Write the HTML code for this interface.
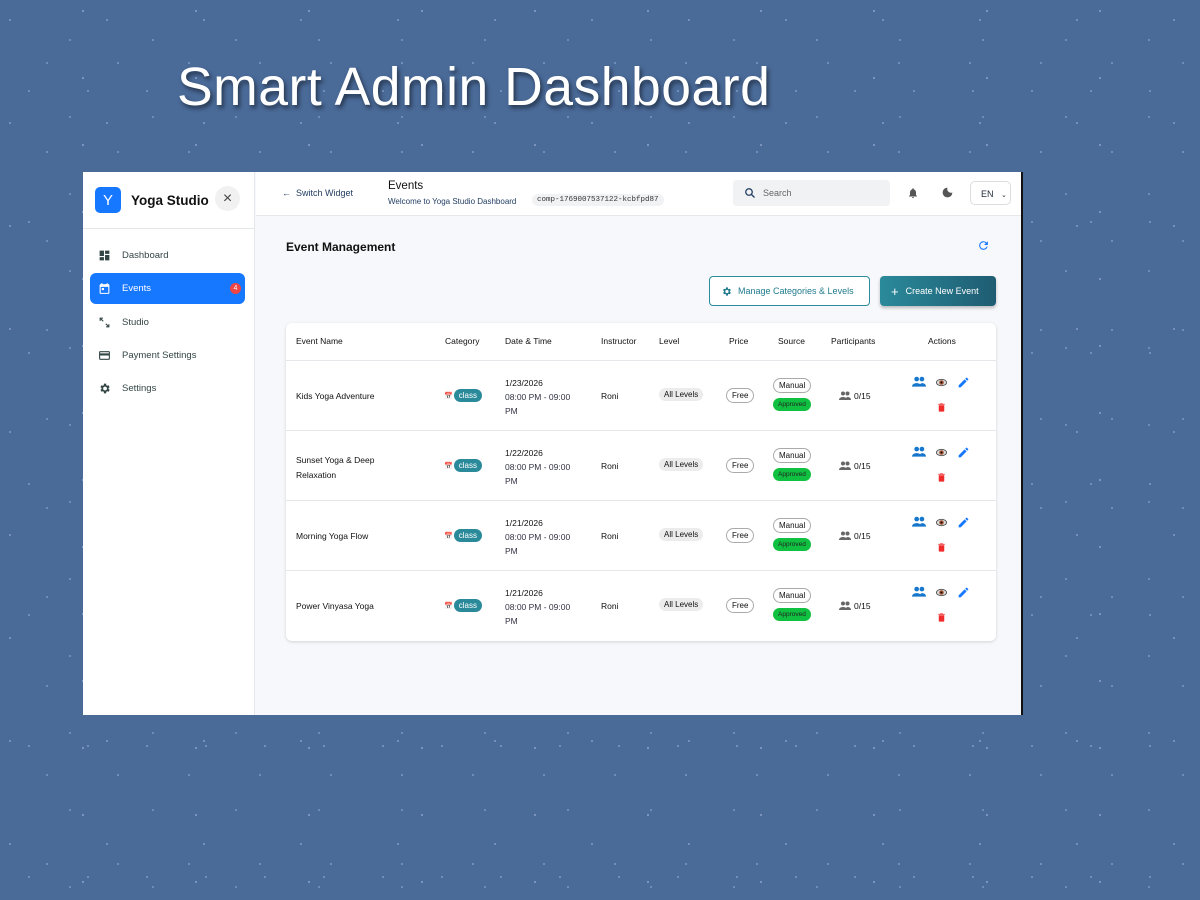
<!DOCTYPE html>
<html><head><meta charset="utf-8"><style>
*{box-sizing:border-box;margin:0;padding:0}
body{width:1200px;height:900px;overflow:hidden;background:#4a6a98;font-family:"Liberation Sans",sans-serif;position:relative;color:#1f2937}
.stars{position:absolute;inset:0;background-image:radial-gradient(1px 1px at 10px 20px,#a9bde0 50%,transparent),radial-gradient(1px 1px at 47px 63px,#9fb6dc 50%,transparent),radial-gradient(1px 1px at 83px 11px,#b3c6e8 50%,transparent),radial-gradient(1px 1px at 29px 91px,#a3b8de 50%,transparent),radial-gradient(1px 1px at 70px 40px,#9cb2d8 50%,transparent);background-size:97px 103px,71px 89px,113px 67px,59px 131px,83px 77px}
h1{position:absolute;left:177px;top:57px;font-size:53.5px;font-weight:400;color:#fff;text-shadow:2px 3px 4px rgba(0,0,0,.5);letter-spacing:.5px}
.panel{position:absolute;left:83px;top:172px;width:940px;height:543px;background:#f7f8fb;border-right:2px solid #111}
.side{position:absolute;left:0;top:0;width:172px;height:543px;background:#fff;border-right:1px solid #e5e7eb}
.brand{height:57px;border-bottom:1px solid #e5e7eb;display:flex;align-items:center;padding-left:12px}
.logo{width:26px;height:26px;background:#1677ff;border-radius:5px;color:#fff;font-size:15px;display:flex;align-items:center;justify-content:center}
.bname{font-weight:bold;font-size:13.5px;margin-left:10px;color:#111}
.close{position:absolute;left:132px;top:14px;width:25px;height:25px;border-radius:50%;background:#f1f1f1;text-align:center;line-height:25px;color:#444;font-size:16px}
.nav{position:absolute;left:7px;width:155px;height:31px;display:flex;align-items:center;padding-left:8px;font-size:9.5px;color:#344;border-radius:6px}
.nav svg{width:13px;height:13px;margin-right:11px}
.nav.act{background:#1677ff;color:#fff}
.badge{position:absolute;right:4px;width:11px;height:11px;border-radius:50%;background:#ef4444;color:#fff;font-size:7px;text-align:center;line-height:11px}
.top{position:absolute;left:173px;top:0;right:0;height:44px;background:#fff;border-bottom:1px solid #e5e7eb}
.sw{position:absolute;left:26px;top:16px;font-size:9px;color:#1e3a5f}
.tt{position:absolute;left:132px;top:8px;font-size:11.5px;color:#111}
.ts{position:absolute;left:132px;top:25px;font-size:8px;color:#1e3a5f}
.comp{position:absolute;left:276px;top:22px;background:#f1f2f4;border-radius:7px;padding:2px 5px;font-family:"Liberation Mono",monospace;font-size:7.5px;color:#333}
.search{position:absolute;left:477px;top:8px;width:157px;height:26px;background:#f1f2f4;border-radius:4px;font-size:9px;color:#666;padding:8px 0 0 30px}
.lang{position:absolute;left:714px;top:9px;width:41px;height:24px;border:1px solid #ddd;border-radius:5px;font-size:9px;padding:7px 0 0 10px}
.em{position:absolute;left:203px;top:68px;font-size:12px;font-weight:bold;color:#111}
.btn1{position:absolute;left:626px;top:104px;width:161px;height:30px;border:1px solid #2c8c9c;border-radius:4px;background:#fff;color:#1f7a8c;font-size:9px;display:flex;align-items:center;padding-left:11px}
.btn2{position:absolute;left:797px;top:104px;width:116px;height:30px;border-radius:4px;background:linear-gradient(90deg,#2a8a9a,#1f5c72);color:#fff;font-size:9px;display:flex;align-items:center;padding-left:11px;box-shadow:0 2px 3px rgba(0,0,0,.25)}
.card{position:absolute;left:203px;top:151px;width:710px;height:318px;background:#fff;border-radius:6px;box-shadow:0 1px 3px rgba(0,0,0,.15)}
.th{position:absolute;top:13px;font-size:8.5px;color:#111}
.row{position:absolute;left:0;width:710px;height:70px;border-top:1px solid #e5e7eb;font-size:8.5px;color:#111}
.row>*{position:absolute}
.cls{background:#2a8a9a;color:#fff;border-radius:8px;padding:2px 5px;font-size:8px}
.pill{border-radius:9px;padding:2px 5px;font-size:8px}
.ap{background:#10c040;color:#222;border-radius:7px;font-size:6.5px;padding:3px 5px}
</style></head><body>
<div class="stars"></div>
<h1>Smart Admin Dashboard</h1>
<div class="panel">
 <div class="side">
  <div class="brand"><div class="logo">Y</div><div class="bname">Yoga Studio</div><div class="close">×</div></div>
  <div class="nav" style="top:68px"><svg viewBox="0 0 24 24" fill="#344"><path d="M3 13h8V3H3zm0 8h8v-6H3zm10 0h8V11h-8zm0-18v6h8V3z"/></svg>Dashboard</div>
  <div class="nav act" style="top:101px"><svg viewBox="0 0 24 24" fill="#fff"><path d="M19 4h-1V2h-2v2H8V2H6v2H5a2 2 0 00-2 2v14a2 2 0 002 2h14a2 2 0 002-2V6a2 2 0 00-2-2zm0 16H5V9h14zM7 11h4v4H7z"/></svg>Events<span class="badge">4</span></div>
  <div class="nav" style="top:135px"><svg viewBox="0 0 24 24" fill="#344"><path d="M3 3h6v2H6.4l4 4-1.4 1.4-4-4V9H3zm18 18h-6v-2h2.6l-4-4 1.4-1.4 4 4V15h2z"/></svg>Studio</div>
  <div class="nav" style="top:168px"><svg viewBox="0 0 24 24" fill="#344"><path d="M20 4H4a2 2 0 00-2 2v12a2 2 0 002 2h16a2 2 0 002-2V6a2 2 0 00-2-2zm0 14H4v-6h16zm0-10H4V6h16z"/></svg>Payment Settings</div>
  <div class="nav" style="top:201px"><svg viewBox="0 0 24 24" fill="#344"><path d="M19.4 13a7.5 7.5 0 000-2l2.1-1.6-2-3.5-2.5 1a7 7 0 00-1.7-1L15 3h-4l-.4 2.9a7 7 0 00-1.7 1l-2.5-1-2 3.5L6.6 11a7.5 7.5 0 000 2l-2.1 1.6 2 3.5 2.5-1a7 7 0 001.7 1L11 21h4l.4-2.9a7 7 0 001.7-1l2.5 1 2-3.5zM13 15.5a3.5 3.5 0 110-7 3.5 3.5 0 010 7z"/></svg>Settings</div>
 </div>
 <div class="top">
  <div class="sw">←&nbsp;&nbsp;Switch Widget</div>
  <div class="tt">Events</div>
  <div class="ts">Welcome to Yoga Studio Dashboard</div>
  <div class="comp">comp-1769007537122-kcbfpd87</div>
  <div class="search"><svg style="position:absolute;left:11px;top:7px" width="12" height="12" viewBox="0 0 24 24" fill="none" stroke="#1e3a5f" stroke-width="2.5"><circle cx="10" cy="10" r="6.5"/><path d="M15 15l6 6"/></svg>Search</div>
  <svg style="position:absolute;left:651px;top:14px" width="12" height="14" viewBox="0 0 24 24" fill="#555"><path d="M12 22a2 2 0 002-2h-4a2 2 0 002 2zm6-6V11c0-3-1.6-5.6-4.5-6.3V4a1.5 1.5 0 00-3 0v.7C7.6 5.4 6 8 6 11v5l-2 2v1h16v-1z"/></svg>
  <svg style="position:absolute;left:685px;top:14px" width="13" height="13" viewBox="0 0 24 24" fill="#555"><path d="M12 3a9 9 0 109 9 7 7 0 01-9-9z"/></svg>
  <div class="lang">EN <span style="font-size:7px;margin-left:5px">⌄</span></div>
 </div>
 <div class="em">Event Management</div>
 <svg style="position:absolute;left:894px;top:67px" width="13" height="13" viewBox="0 0 24 24" fill="#1677ff"><path d="M17.6 6.4A8 8 0 1019.7 14h-2.1A6 6 0 1112 6c1.7 0 3.1.7 4.2 1.8L13 11h7V4z"/></svg>
 <div class="btn1"><svg width="11" height="11" viewBox="0 0 24 24" fill="#1f7a8c" style="margin-right:6px"><path d="M19.4 13a7.5 7.5 0 000-2l2.1-1.6-2-3.5-2.5 1a7 7 0 00-1.7-1L15 3h-4l-.4 2.9a7 7 0 00-1.7 1l-2.5-1-2 3.5L6.6 11a7.5 7.5 0 000 2l-2.1 1.6 2 3.5 2.5-1a7 7 0 001.7 1L11 21h4l.4-2.9a7 7 0 001.7-1l2.5 1 2-3.5zM13 15.5a3.5 3.5 0 110-7 3.5 3.5 0 010 7z"/></svg>Manage Categories &amp; Levels</div>
 <div class="btn2"><span style="font-size:13px;margin-right:7px">+</span>Create New Event</div>
 <div class="card">
  <div class="th" style="left:10px">Event Name</div><div class="th" style="left:159px">Category</div><div class="th" style="left:219px">Date &amp; Time</div><div class="th" style="left:315px">Instructor</div><div class="th" style="left:373px">Level</div><div class="th" style="left:443px">Price</div><div class="th" style="left:492px">Source</div><div class="th" style="left:545px">Participants</div><div class="th" style="left:642px">Actions</div>
  <div class="row" style="top:37px"><div style="left:10px;top:30px">Kids Yoga Adventure</div>
  <div style="left:158px;top:28px;display:flex;align-items:center"><span style="font-size:7px;margin-right:1px">📅</span><span class="cls">class</span></div>
  <div style="left:219px;top:15px;line-height:14px">1/23/2026<br><span style="color:#334">08:00 PM - 09:00<br>PM</span></div>
  <div style="left:315px;top:30px">Roni</div>
  <div class="pill" style="left:373px;top:27px;background:#ececec">All Levels</div>
  <div class="pill" style="left:440px;top:27px;border:1px solid #aaa">Free</div>
  <div class="pill" style="left:487px;top:17px;border:1px solid #aaa">Manual</div>
  <div class="ap" style="left:487px;top:37px">Approved</div>
  <div style="left:553px;top:30px;display:flex;align-items:center"><svg width="12" height="10" viewBox="0 0 24 20" fill="#666" style="margin-right:3px"><circle cx="8" cy="5" r="4"/><circle cx="17" cy="5" r="4"/><path d="M0 18c0-4 4-6 8-6s8 2 8 6zM12 18c0-3 2-5 5-6 4 0 7 2 7 6z"/></svg>0/15</div>
  <div style="left:626px;top:15px;width:60px;height:40px"><svg width="14" height="12" viewBox="0 0 24 20" fill="#1677cc" style="position:absolute;left:0;top:0"><circle cx="8" cy="5" r="4"/><circle cx="17" cy="5" r="4"/><path d="M0 18c0-4 4-6 8-6s8 2 8 6zM12 18c0-3 2-5 5-6 4 0 7 2 7 6z"/></svg><svg width="11" height="11" viewBox="0 0 24 24" style="position:absolute;left:24px;top:1px"><ellipse cx="12" cy="12" rx="11" ry="7" fill="#ddd" stroke="#555" stroke-width="2"/><circle cx="12" cy="12" r="5" fill="#a0522d"/><circle cx="12" cy="12" r="2" fill="#000"/></svg><svg width="13" height="13" viewBox="0 0 24 24" fill="#1677ff" style="position:absolute;left:45px;top:0"><path d="M3 17.2V21h3.8L17.8 10 14 6.2zM20.7 7a1 1 0 000-1.4l-2.3-2.3a1 1 0 00-1.4 0l-1.8 1.8 3.7 3.7z"/></svg><svg width="11" height="13" viewBox="0 0 24 24" fill="#ef2b2b" style="position:absolute;left:24px;top:25px"><path d="M6 19a2 2 0 002 2h8a2 2 0 002-2V7H6zM19 4h-3.5l-1-1h-5l-1 1H5v2h14z"/></svg></div></div>
 </div>
</div>
<script>
const data=[["Kids Yoga Adventure","1/23/2026"],["Sunset Yoga &amp; Deep<br>Relaxation","1/22/2026"],["Morning Yoga Flow","1/21/2026"],["Power Vinyasa Yoga","1/21/2026"]];
const card=document.querySelector('.card');const tpl=card.querySelector('.row');
data.forEach((d,i)=>{if(i==0)return;const r=tpl.cloneNode(true);r.style.top=(37+70*i)+'px';r.children[0].innerHTML=d[0];if(d[0].includes('<br>')){r.children[0].style.top='22px';r.children[0].style.lineHeight='15px'}r.children[2].innerHTML=d[1]+'<br><span style="color:#334">08:00 PM - 09:00<br>PM</span>';card.appendChild(r);});
</script>
</body></html>
